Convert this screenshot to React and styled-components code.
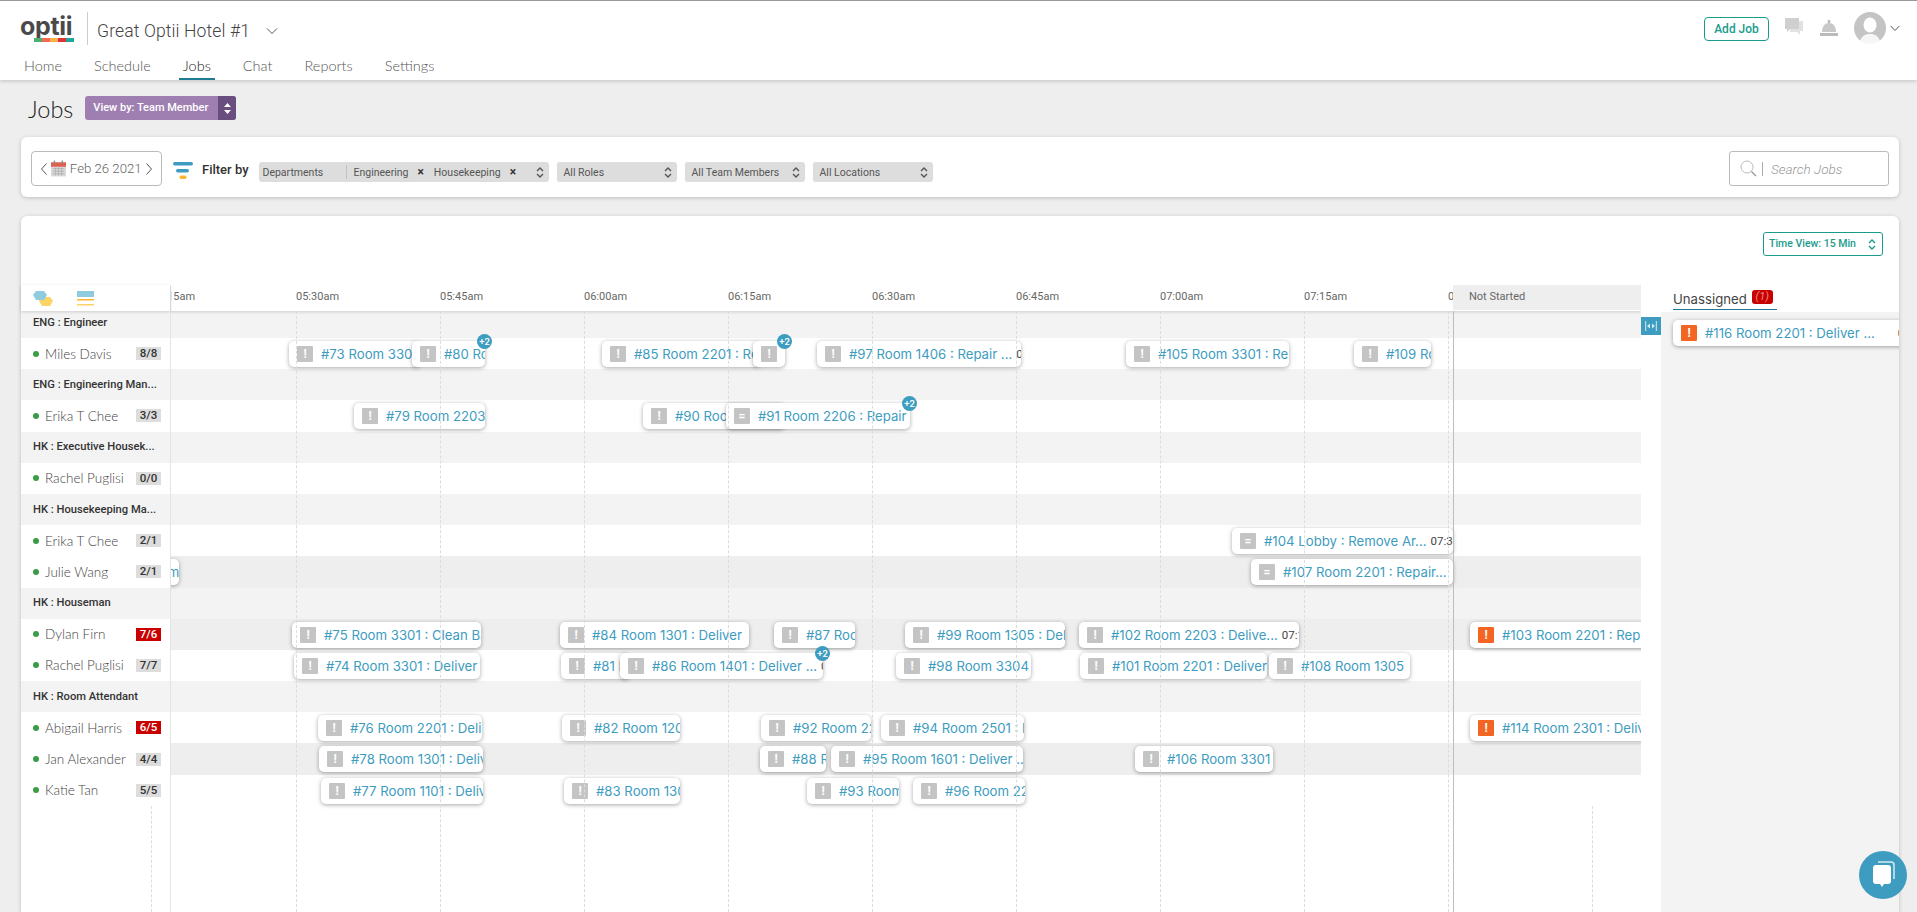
import React from "react";
import styled, { createGlobalStyle } from "styled-components";

const Global = createGlobalStyle`
  html, body { margin: 0; padding: 0; background: #eeeeee; overflow: hidden; }
  body { font-family: Roboto, "Liberation Sans", sans-serif; color: #555; }
  * { box-sizing: border-box; }
`;

const ORIGIN = 171;
const CARD_FONT = 'Inter, "Open Sans", sans-serif';
const BLUE = "#3d9cc0";
const TEAL = "#1a9c8c";

const Page = styled.div`
  width: 1917px;
  height: 912px;
  overflow: hidden;
  display: flex;
  flex-direction: column;
  position: relative;
`;

/* ---------- Header ---------- */
const Header = styled.header`
  height: 80px;
  background: #fff;
  border-top: 1px solid #999;
  box-shadow: 0 1px 4px rgba(0, 0, 0, 0.2);
  position: relative;
  z-index: 5;
  flex: none;
`;
const TopBar = styled.div`
  display: flex;
  align-items: flex-start;
  height: 49px;
  padding: 11px 0 0 20px;
`;
const Logo = styled.div`
  width: 54px;
  height: 30px;
  margin-top: 2px;
  display: flex;
  flex-direction: column;
`;
const LogoWord = styled.span`
  font: 700 25px/25px Inter, sans-serif;
  color: #4a4a4a;
  letter-spacing: -0.3px;
`;
const LogoStrip = styled.div`
  display: flex;
  height: 4px;
  margin-top: -1px;
  padding-left: 14px;
`;
const LogoSeg = styled.i`
  flex: 1;
  background: ${(p) => p.$c};
`;
const HeadDivider = styled.div`
  width: 1px;
  height: 33px;
  background: #ccc;
  margin: 0 9px 0 13px;
`;
const HotelName = styled.div`
  font: 300 17.6px/37px Roboto, sans-serif;
  color: #444;
  letter-spacing: 0.1px;
  margin-top: 1px;
`;
const HotelChevron = styled.svg`
  margin: 15px 0 0 16px;
`;
const RightTools = styled.div`
  margin-left: auto;
  display: flex;
  align-items: flex-start;
`;
const AddJob = styled.button`
  width: 65px;
  height: 24px;
  margin-top: 5px;
  border: 1px solid ${TEAL};
  border-radius: 4px;
  background: #fff;
  color: ${TEAL};
  font: 500 12px Roboto, sans-serif;
  padding: 0;
`;
const ToolIcon = styled.svg`
  margin: ${(p) => p.$m};
  flex: none;
`;
const Nav = styled.nav`
  display: flex;
  padding-left: 24px;
  gap: 32px;
  height: 30px;
`;
const NavItem = styled.a`
  font: 300 14.5px/32px Lato, sans-serif;
  color: ${(p) => (p.$active ? "#222" : "#555")};
  position: relative;
  &::after {
    content: "";
    display: ${(p) => (p.$active ? "block" : "none")};
    position: absolute;
    left: -4px;
    right: -4px;
    bottom: 0;
    height: 2px;
    background: #1f7a93;
  }
`;

/* ---------- Title ---------- */
const TitleRow = styled.div`
  height: 57px;
  flex: none;
  display: flex;
  align-items: flex-start;
  padding: 16px 0 0 28px;
  gap: 12px;
`;
const PageTitle = styled.h1`
  margin: 0;
  font: 300 23.5px/27px Lato, sans-serif;
  color: #222;
`;
const ViewBy = styled.div`
  width: 151px;
  height: 24px;
  display: flex;
  border-radius: 3px;
  overflow: hidden;
  background: #9f7fb2;
  color: #fff;
  font: 500 11px/24px Roboto, sans-serif;
  padding-left: 8px;
  justify-content: space-between;
  white-space: nowrap;
`;
const ViewByArrow = styled.div`
  width: 18px;
  background: #6b4e80;
  display: flex;
  align-items: center;
  justify-content: center;
`;

/* ---------- Filter card ---------- */
const FilterCard = styled.section`
  flex: none;
  margin: 0 18px 19px 21px;
  height: 60px;
  background: #fff;
  border-radius: 6px;
  box-shadow: 0 1px 4px rgba(0, 0, 0, 0.2);
  display: flex;
  align-items: flex-start;
  padding: 14px 10px 0 10px;
`;
const DateBox = styled.div`
  width: 131px;
  height: 35px;
  border: 1px solid #bbb;
  border-radius: 4px;
  display: flex;
  align-items: center;
  justify-content: space-between;
  padding: 0 8px 0 8px;
  font: 300 13.2px Roboto, sans-serif;
  color: #666;
  white-space: nowrap;
`;
const FilterIcon = styled.svg`
  margin: 11px 0 0 11px;
  flex: none;
`;
const FilterLabel = styled.div`
  font: 500 13px/20px Roboto, sans-serif;
  color: #333;
  margin: 9px 10px 0 9px;
  white-space: nowrap;
`;
const Selects = styled.div`
  display: flex;
  gap: 8px;
  margin-top: 11px;
`;
const Select = styled.div`
  height: 20px;
  width: ${(p) => p.$w}px;
  background: #ddd;
  border-radius: 3px;
  font: 400 10.5px/21px Roboto, sans-serif;
  color: #555;
  display: flex;
  align-items: center;
  justify-content: space-between;
  padding: 0 5px 0 7px;
`;
const DeptName = styled.span`
  width: 84px;
  margin-left: -3px;
  border-right: 1px solid #c2c2c2;
  height: 14px;
  line-height: 16px;
  flex: none;
`;
const Chip = styled.span`
  margin-left: ${(p) => p.$m}px;
  white-space: nowrap;
`;
const ChipX = styled.b`
  margin-left: 9px;
  color: #333;
  font-size: 12px;
`;
const SelectCaret = styled.svg`
  margin-left: auto;
  flex: none;
`;
const Search = styled.div`
  margin-left: auto;
  width: 160px;
  height: 35px;
  border: 1px solid #bbb;
  border-radius: 3px;
  display: flex;
  align-items: center;
  padding-left: 10px;
  font: italic 300 13.5px Roboto, sans-serif;
  color: #999;
`;
const SearchBar = styled.i`
  width: 1px;
  height: 14px;
  background: #aaa;
  margin: 0 8px 0 5px;
`;

/* ---------- Board ---------- */
const Board = styled.section`
  flex: 1;
  margin: 0 18px 0 21px;
  background: #fff;
  border-radius: 6px 6px 0 0;
  box-shadow: 0 1px 4px rgba(0, 0, 0, 0.2);
  display: flex;
  flex-direction: column;
  min-height: 0;
`;
const BoardTools = styled.div`
  height: 69px;
  flex: none;
  display: flex;
  justify-content: flex-end;
  padding: 16px 16px 0 0;
`;
const TimeView = styled.div`
  width: 120px;
  height: 24px;
  border: 1px solid ${TEAL};
  border-radius: 3px;
  color: ${TEAL};
  font: 500 10.5px/22px Roboto, sans-serif;
  padding: 0 6px 0 5px;
  display: flex;
  align-items: center;
  justify-content: space-between;
`;
const Schedule = styled.div`
  flex: 1;
  display: flex;
  min-height: 0;
`;
const LeftColumn = styled.div`
  width: 150px;
  flex: none;
  position: relative;
  z-index: 4;
  display: flex;
  flex-direction: column;
  border-right: 1px solid #e4e4e4;
`;
const LeftHead = styled.div`
  height: 26px;
  flex: none;
  padding: 6px 0 0 12px;
  display: flex;
  gap: 24px;
  background: #fff;
  box-shadow: 0 1px 3px rgba(0, 0, 0, 0.16);
  position: relative;
  z-index: 2;
`;
const LeftRows = styled.div`
  display: flex;
  flex-direction: column;
`;
const LeftFill = styled.div`
  flex: 1;
  position: relative;
  &::before {
    content: "";
    position: absolute;
    top: 0;
    bottom: 0;
    left: 130px;
    border-left: 1px dashed #ddd;
  }
`;
const GroupRow = styled.div`
  height: ${(p) => (p.$first ? 27 : 31.2)}px;
  background: #f3f3f3;
  font: 500 11.2px Roboto, sans-serif;
  color: #333;
  display: flex;
  align-items: center;
  padding: 0 0 ${(p) => (p.$first ? 5 : 1)}px 12px;
  white-space: nowrap;
`;
const MemberRow = styled.div`
  height: 31.2px;
  background: #fff;
  display: flex;
  align-items: center;
  padding-left: 12px;
`;
const Dot = styled.i`
  width: 6px;
  height: 6px;
  border-radius: 50%;
  background: #3a9c46;
  margin-right: 6px;
`;
const MemberName = styled.span`
  font: 300 13.5px Lato, sans-serif;
  color: #444;
  white-space: nowrap;
`;
const Count = styled.span`
  margin-left: auto;
  margin-right: 9px;
  width: 25px;
  height: 13px;
  background: ${(p) => (p.$over ? "#c80000" : "#ddd")};
  color: ${(p) => (p.$over ? "#fff" : "#333")};
  font: 500 11.5px/13px Roboto, sans-serif;
  text-align: center;
`;
const Timeline = styled.div`
  width: 1470px;
  flex: none;
  position: relative;
  overflow: hidden;
  display: flex;
  flex-direction: column;
`;
const TimeHead = styled.div`
  height: 26px;
  flex: none;
  display: flex;
  margin-left: -19px;
  background: #fff;
  box-shadow: 0 1px 3px rgba(0, 0, 0, 0.16);
  position: relative;
  z-index: 3;
`;
const Tick = styled.div`
  width: 144px;
  flex: none;
  font: 400 11px/24px Roboto, sans-serif;
  color: #666;
`;
const NotStarted = styled.div`
  position: absolute;
  left: 1282px;
  top: 0;
  width: 188px;
  height: 26px;
  background: #eeeeee;
  border-bottom: 1px solid #fff;
  font: 400 11px/23px Roboto, sans-serif;
  color: #666;
  padding-left: 16px;
  z-index: 4;
`;
const Track = styled.div`
  height: ${(p) => (p.$first ? 27 : 31.2)}px;
  flex: none;
  position: relative;
  background: ${(p) => p.$bg};
`;
const GridLine = styled.i.attrs((p) => ({ style: { left: p.$x, top: p.$top } }))`
  position: absolute;
  bottom: 0;
  border-left: 1px dashed #dcdcdc;
  z-index: 3;
`;
const NowLine = styled.i`
  position: absolute;
  left: 1282px;
  top: 26px;
  bottom: 0;
  border-left: 1px solid #bdbdbd;
  z-index: 3;
`;
const Job = styled.div.attrs((p) => ({ style: { left: p.$x, width: p.$w } }))`
  position: absolute;
  top: 3px;
  height: 26px;
  z-index: 2;
`;
const JobBody = styled.div`
  height: 100%;
  background: #fff;
  border-radius: 5px;
  box-shadow: 0 1px 4px rgba(0, 0, 0, 0.35);
  overflow: hidden;
  display: flex;
  align-items: center;
  padding-left: 8px;
  white-space: nowrap;
`;
const Priority = styled.span`
  width: 16px;
  height: 16px;
  flex: none;
  border-radius: 1px;
  background: ${(p) => (p.$hot ? "#f26522" : "#c4c4c4")};
  color: #fff;
  font: 700 12px/16px Roboto, sans-serif;
  text-align: center;
  margin-right: 8px;
`;
const JobText = styled.span`
  font: 400 13.2px ${CARD_FONT};
  color: ${BLUE};
  flex: none;
`;
const JobTime = styled.span`
  font: 400 11.5px Roboto, sans-serif;
  color: #444;
  margin-left: ${(p) => p.$gap}px;
  flex: none;
`;
const PlusBadge = styled.b`
  position: absolute;
  top: -7px;
  right: -7px;
  width: 15px;
  height: 15px;
  border-radius: 50%;
  background: ${BLUE};
  color: #fff;
  font: 500 9.5px/15px Roboto, sans-serif;
  text-align: center;
  z-index: 5;
`;
const Gutter = styled.div`
  width: 20px;
  flex: none;
  padding-top: 32px;
  position: relative;
  z-index: 4;
  background: #fff;
`;
const ResizeTab = styled.div`
  width: 20px;
  height: 18px;
  background: ${BLUE};
  display: flex;
  align-items: center;
  justify-content: center;
`;
const Panel = styled.aside`
  flex: 1;
  display: flex;
  flex-direction: column;
  min-width: 0;
  overflow: hidden;
`;
const PanelHead = styled.div`
  height: 27px;
  flex: none;
  padding-left: 12px;
  background: #fff;
`;
const PanelTitle = styled.div`
  display: inline-flex;
  align-items: center;
  width: 104px;
  height: 25px;
  border-bottom: 1px solid #1f7a93;
  font: 400 13.2px ${CARD_FONT};
  color: #444;
  padding-top: 3px;
  gap: 5px;
`;
const RedBadge = styled.span`
  width: 21px;
  height: 14px;
  border-radius: 3px;
  background: #c80000;
  color: #e88;
  font: italic 400 11px/14px Roboto, sans-serif;
  text-align: center;
  margin-top: -3px;
`;
const PanelBody = styled.div`
  flex: 1;
  background: #f3f3f3;
  padding: 8px 0 0 12px;
`;
const PanelCard = styled.div`
  height: 26px;
  width: 240px;
`;
const Fab = styled.div`
  position: absolute;
  left: 1859px;
  top: 851px;
  width: 48px;
  height: 48px;
  border-radius: 50%;
  background: ${BLUE};
  display: flex;
  align-items: center;
  justify-content: center;
  z-index: 9;
`;

/* ---------- Small drawings ---------- */
const Caret = ({ c = "#555" }) => (
  <SelectCaret width="8" height="13" viewBox="0 0 8 13">
    <path d="M1 5 4 2l3 3M1 8l3 3 3-3" fill="none" stroke={c} strokeWidth="1.4" />
  </SelectCaret>
);
const Chev = ({ dir = "l" }) => (
  <svg width="8" height="14" viewBox="0 0 8 14" style={{ flex: "none" }}>
    <path d={dir === "l" ? "M6.5 1.5 1.5 7l5 5.5" : "M1.5 1.5 6.5 7l-5 5.5"} fill="none" stroke="#555" />
  </svg>
);
const CalendarIcon = () => (
  <svg width="15" height="17" viewBox="0 0 17 18" style={{ flex: "none" }}>
    <rect y="2" width="17" height="16" fill="#d9d9d9" />
    <rect y="2" width="17" height="5" fill="#e0604f" />
    <rect x="3" y="0" width="1.6" height="4" fill="#888" />
    <rect x="12" y="0" width="1.6" height="4" fill="#888" />
    <path d="M2 9h13M2 12h13M2 15h13M5 8v9M8.500 8v9M12 8v9" stroke="#aaa" strokeWidth=".8" />
  </svg>
);
const ResizeGlyph = () => (
  <svg width="12" height="10" viewBox="0 0 12 10">
    <path d="M.7 0v10M11.300 0v10" stroke="#d5ecf4" />
    <path d="M2 5l3-2.500v5zM10 5 7 2.500v5z" fill="#d5ecf4" />
  </svg>
);

/* ---------- Data ---------- */
const HOURS = ["05:15am", "05:30am", "05:45am", "06:00am", "06:15am", "06:30am", "06:45am", "07:00am", "07:15am", "07:30am", "07:45am"];
const GRID = [295.5, 439.5, 583.5, 727.5, 871.5, 1015.5, 1159.5, 1303.5, 1447.5];

const J = (x, end, text, extra = {}) => ({ x, end, text, ...extra });
const ROWS = [
  { group: "ENG : Engineer", first: true },
  {
    name: "Miles Davis", count: "8/8",
    jobs: [
      J(289, 420, "#73 Room 3301 : Repair"), J(412, 485, "#80 Room 2201", { badge: 1 }),
      J(602, 760, "#85 Room 2201 : Repair"), J(753, 785, "", { badge: 1 }),
      J(817, 1021, "#97 Room 1406 : Repair ...", { time: "07:00" }),
      J(1126, 1289, "#105 Room 3301 : Repair"), J(1354, 1431, "#109 Room 2201"),
    ],
  },
  { group: "ENG : Engineering Man..." },
  {
    name: "Erika T Chee", count: "3/3",
    jobs: [
      J(354, 485, "#79 Room 2203 : Repair"), J(643, 785, "#90 Room 2201 : Repair"),
      J(726, 910, "#91 Room 2206 : Repair", { icon: "=", badge: 1 }),
    ],
  },
  { group: "HK : Executive Housek..." },
  { name: "Rachel Puglisi", count: "0/0" },
  { group: "HK : Housekeeping Ma..." },
  { name: "Erika T Chee", count: "2/1", jobs: [J(1232, 1453, "#104 Lobby : Remove Ar...", { icon: "=", time: "07:30am" })] },
  {
    name: "Julie Wang", count: "2/1", bg: "#eeeeee",
    jobs: [J(84, 179, "#72 Room"), J(1251, 1453, "#107 Room 2201 : Repair...", { icon: "=" })],
  },
  { group: "HK : Houseman" },
  {
    name: "Dylan Firn", count: "7/6", over: true, bg: "#eeeeee",
    jobs: [
      J(292, 481, "#75 Room 3301 : Clean Bath"), J(560, 749, "#84 Room 1301 : Deliver"),
      J(774, 855, "#87 Room 1301"), J(905, 1065, "#99 Room 1305 : Deliver"),
      J(1079, 1299, "#102 Room 2203 : Delive...", { time: "07:15am" }),
      J(1470, 1700, "#103 Room 2201 : Repair", { hot: true }),
    ],
  },
  {
    name: "Rachel Puglisi", count: "7/7",
    jobs: [
      J(294, 480, "#74 Room 3301 : Deliver Towels"), J(561, 630, "#81 Room 1201"),
      J(620, 823, "#86 Room 1401 : Deliver ...", { badge: 1, time: "06:30am" }),
      J(896, 1031, "#98 Room 3304 : Repair"), J(1080, 1267, "#101 Room 2201 : Deliver Towels"),
      J(1269, 1410, "#108 Room 1305"),
    ],
  },
  { group: "HK : Room Attendant" },
  {
    name: "Abigail Harris", count: "6/5", over: true,
    jobs: [
      J(318, 482, "#76 Room 2201 : Deliver"), J(562, 680, "#82 Room 1201 : Deliver"),
      J(761, 871, "#92 Room 2201 : Deliver"), J(881, 1024, "#94 Room 2501 : Deliver"),
      J(1470, 1700, "#114 Room 2301 : Deliver", { hot: true }),
    ],
  },
  {
    name: "Jan Alexander", count: "4/4", bg: "#eeeeee",
    jobs: [
      J(319, 483, "#78 Room 1301 : Deliver"), J(760, 826, "#88 Room 1301"),
      J(831, 1023, "#95 Room 1601 : Deliver ..."), J(1135, 1273, "#106 Room 3301"),
    ],
  },
  {
    name: "Katie Tan", count: "5/5",
    jobs: [
      J(321, 483, "#77 Room 1101 : Deliver"), J(564, 680, "#83 Room 1301 : Deliver"),
      J(807, 899, "#93 Room 2201 : Deliver"), J(913, 1025, "#96 Room 2201 : Deliver"),
    ],
  },
];

const JobContent = ({ j }) => (
  <JobBody>
    <Priority $hot={j.hot}>{j.icon || "!"}</Priority>
    <JobText>{j.text}</JobText>
    {j.time && <JobTime $gap={j.gap || 4}>{j.time}</JobTime>}
  </JobBody>
);

export default function App() {
  return (
    <Page>
      <Global />
      <Header>
        <TopBar>
          <Logo>
            <LogoWord>optii</LogoWord>
            <LogoStrip>
              {["#4caf6e", "#f26a4f", "#f7b14a", "#e0323c", "#1ea89a"].map((c) => (
                <LogoSeg key={c} $c={c} />
              ))}
            </LogoStrip>
          </Logo>
          <HeadDivider />
          <HotelName>Great Optii Hotel #1</HotelName>
          <HotelChevron width="12" height="8" viewBox="0 0 12 8">
            <path d="M1 1.500 6 6.500l5-5" fill="none" stroke="#555" />
          </HotelChevron>
          <RightTools>
            <AddJob>Add Job</AddJob>
            <ToolIcon $m="6px 0 0 16px" width="18" height="17" viewBox="0 0 18 17">
              <path d="M5 3h13v10h-3v4l-3-3H5z" fill="#e2e2e2" />
              <path d="M0 0h14v11H5l-3 3v-3H0z" fill="#cfcfcf" />
            </ToolIcon>
            <ToolIcon $m="8px 0 0 17px" width="18" height="16" viewBox="0 0 18 16">
              <rect x="7.800" y="0" width="2.400" height="3" fill="#bbb" />
              <path d="M2 12C2 6 5 3 9 3s7 3 7 9z" fill="#c8c8c8" />
              <rect y="13" width="18" height="3" fill="#bbb" />
            </ToolIcon>
            <ToolIcon $m="0 0 0 16px" width="32" height="32" viewBox="0 0 32 32">
              <circle cx="16" cy="16" r="16" fill="#c4c4c4" />
              <ellipse cx="16" cy="13" rx="6.500" ry="7.500" fill="#fff" />
              <path d="M6 29c2-6 6-7 10-7s8 1 10 7a16 16 0 0 1-20 0z" fill="#fff" opacity=".85" />
            </ToolIcon>
            <ToolIcon $m="13px 17px 0 4px" width="10" height="7" viewBox="0 0 10 7">
              <path d="M.7 1 5 5.500 9.300 1" fill="none" stroke="#555" />
            </ToolIcon>
          </RightTools>
        </TopBar>
        <Nav>
          <NavItem>Home</NavItem>
          <NavItem>Schedule</NavItem>
          <NavItem $active>Jobs</NavItem>
          <NavItem>Chat</NavItem>
          <NavItem>Reports</NavItem>
          <NavItem>Settings</NavItem>
        </Nav>
      </Header>

      <TitleRow>
        <PageTitle>Jobs</PageTitle>
        <ViewBy>
          View by: Team Member
          <ViewByArrow>
            <svg width="7" height="11" viewBox="0 0 7 11">
              <path d="M3.500 0 7 4H0zM3.500 11 0 7h7z" fill="#fff" />
            </svg>
          </ViewByArrow>
        </ViewBy>
      </TitleRow>

      <FilterCard>
        <DateBox>
          <Chev dir="l" />
          <CalendarIcon />
          Feb 26 2021
          <Chev dir="r" />
        </DateBox>
        <FilterIcon width="20" height="17" viewBox="0 0 20 17">
          <rect width="20" height="3.500" rx="1.700" fill="#3d9cc0" />
          <rect x="3" y="7" width="13" height="3.500" rx="1.700" fill="#3d9cc0" />
          <rect x="6.500" y="13.500" width="7" height="3.500" rx="1.700" fill="#f7b733" />
        </FilterIcon>
        <FilterLabel>Filter by</FilterLabel>
        <Selects>
          <Select $w={290}>
            <DeptName>Departments</DeptName>
            <Chip $m={7}>Engineering</Chip>
            <ChipX>×</ChipX>
            <Chip $m={10}>Housekeeping</Chip>
            <ChipX>×</ChipX>
            <Caret />
          </Select>
          <Select $w={120}>
            All Roles
            <Caret />
          </Select>
          <Select $w={120}>
            All Team Members
            <Caret />
          </Select>
          <Select $w={120}>
            All Locations
            <Caret />
          </Select>
        </Selects>
        <Search>
          <svg width="17" height="17" viewBox="0 0 17 17" style={{ flex: "none" }}>
            <circle cx="7" cy="7" r="6" fill="none" stroke="#bbb" />
            <path d="M11.500 11.500 16 16" stroke="#999" strokeWidth="1.300" />
          </svg>
          <SearchBar />
          Search Jobs
        </Search>
      </FilterCard>

      <Board>
        <BoardTools>
          <TimeView>
            Time View: 15 Min
            <Caret c={TEAL} />
          </TimeView>
        </BoardTools>
        <Schedule>
          <LeftColumn>
            <LeftHead>
              <svg width="20" height="15" viewBox="0 0 20 15">
                <path d="M3 0h8l3 4-3 5H3L0 4z" fill="#8fcbe0" />
                <path d="M9 6h8l3 4-3 5H9l-3-5z" fill="#fcd466" />
                <path d="M6 9h5l1.800-3H9z" fill="#8fcbe0" />
              </svg>
              <svg width="18" height="15" viewBox="0 0 18 15">
                <rect width="17" height="6" fill="#8fcbe0" />
                <rect y="8" width="17" height="1.500" fill="#f7b733" />
                <rect y="13" width="17" height="1.500" fill="#fcd466" />
              </svg>
            </LeftHead>
            <LeftRows>
              {ROWS.map((r, i) =>
                r.group ? (
                  <GroupRow key={i} $first={r.first}>
                    {r.group}
                  </GroupRow>
                ) : (
                  <MemberRow key={i}>
                    <Dot />
                    <MemberName>{r.name}</MemberName>
                    <Count $over={r.over}>{r.count}</Count>
                  </MemberRow>
                )
              )}
            </LeftRows>
            <LeftFill />
          </LeftColumn>

          <Timeline>
            <TimeHead>
              {HOURS.map((h) => (
                <Tick key={h}>{h}</Tick>
              ))}
            </TimeHead>
            <NotStarted>Not Started</NotStarted>
            {ROWS.map((r, i) => (
              <Track key={i} $first={r.first} $bg={r.group ? "#f3f3f3" : r.bg || "#fff"}>
                {(r.jobs || []).map((j) => (
                  <Job key={j.x} $x={j.x - ORIGIN} $w={j.end - j.x}>
                    <JobContent j={j} />
                    {j.badge && <PlusBadge>+2</PlusBadge>}
                  </Job>
                ))}
              </Track>
            ))}
            {GRID.map((g) => (
              <GridLine key={g} $x={g - ORIGIN} $top={26} />
            ))}
            <GridLine $x={1591.5 - ORIGIN} $top={521} />
            <NowLine />
          </Timeline>

          <Gutter>
            <ResizeTab>
              <ResizeGlyph />
            </ResizeTab>
          </Gutter>

          <Panel>
            <PanelHead>
              <PanelTitle>
                Unassigned
                <RedBadge>(1)</RedBadge>
              </PanelTitle>
            </PanelHead>
            <PanelBody>
              <PanelCard>
                <JobContent j={{ text: "#116 Room 2201 : Deliver ...", hot: true, time: "07:45am", gap: 23 }} />
              </PanelCard>
            </PanelBody>
          </Panel>
        </Schedule>
      </Board>

      <Fab>
        <svg width="26" height="28" viewBox="0 0 26 28">
          <path d="M8 1h13a3 3 0 0 1 3 3v14" fill="none" stroke="#fff" strokeWidth="1.500" opacity=".8" />
          <path d="M6 4h12a3 3 0 0 1 3 3v13a3 3 0 0 1-3 3h-4l-2 3-2-3H6a3 3 0 0 1-3-3V7a3 3 0 0 1 3-3z" fill="#fff" />
        </svg>
      </Fab>
    </Page>
  );
}
